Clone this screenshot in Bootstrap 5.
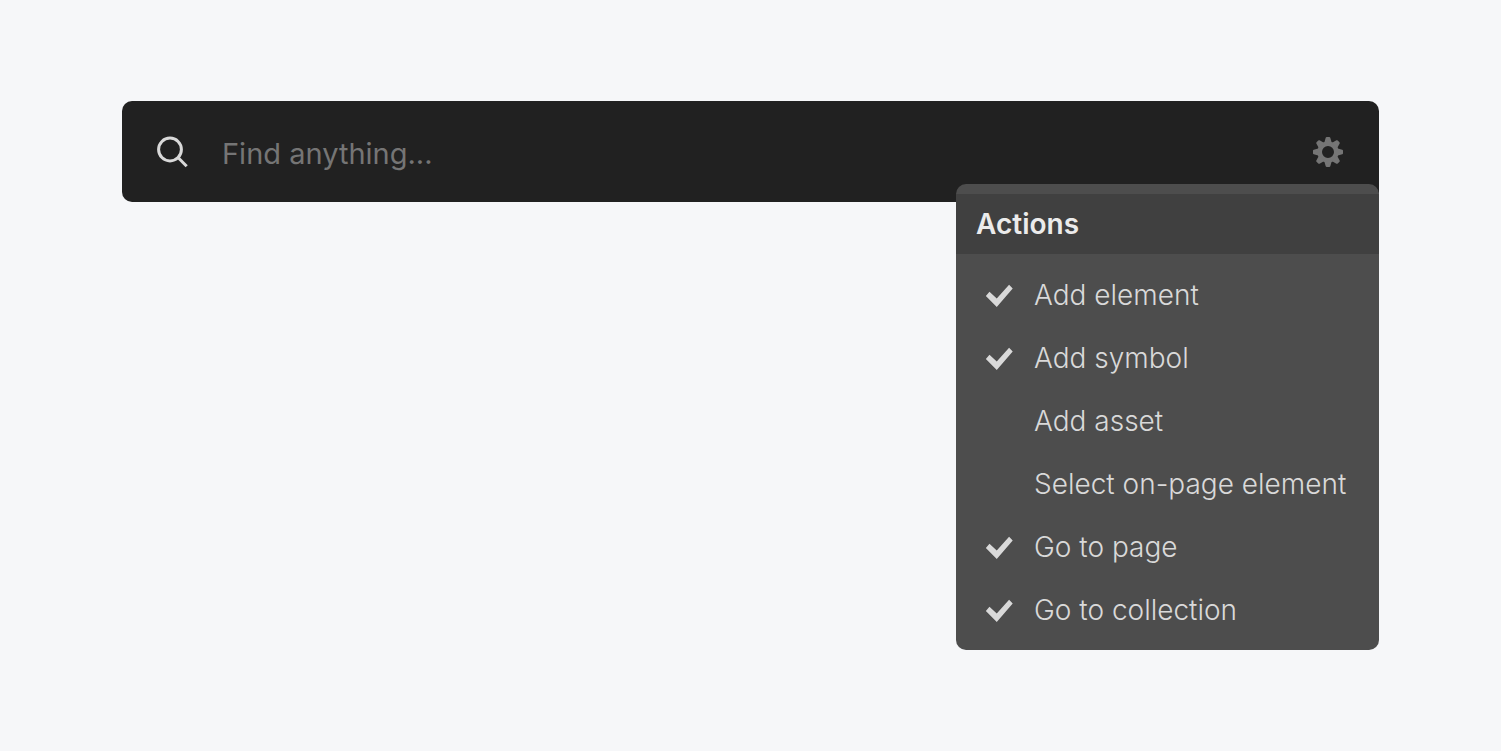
<!DOCTYPE html>
<html lang="en">
<head>
<meta charset="utf-8">
<meta name="viewport" content="width=device-width, initial-scale=1">
<title>Quick find</title>
<link href="https://cdn.jsdelivr.net/npm/bootstrap@5.3.0/dist/css/bootstrap.min.css" rel="stylesheet">
<style>
body{background:#f6f7f9;font-family:Inter,sans-serif;}
.page{padding:101px 16px 0;}
.finder{max-width:1257px;}
.finder-bar{background:#212121;height:101px;border-radius:10px;padding:0 35px 0 32px;}
.finder-input,.finder-input:focus{background:transparent;border:0;box-shadow:none;color:#d9d9d9;font-size:29px;font-weight:400;line-height:40px;padding:4px 0 0;margin-left:32px;}
.finder-input::placeholder{color:#757575;opacity:1;}
.gear,.gear:hover{color:#757575;line-height:0;}
.actions{background:#4d4d4d;border-radius:10px;width:423px;max-width:100%;margin-top:-18px;padding:10px 0 8px;color:#d9d9d9;}
.actions-title{background:#404040;color:#ebebeb;font-size:28px;line-height:60px;padding:0 20px;margin:0;font-weight:600;}
.actions-list{padding:10px 29px 0;}
.action{height:63px;font-size:28px;font-weight:300;gap:21px;cursor:pointer;white-space:nowrap;}
.action span{padding-bottom:2px;}
.action input{appearance:none;width:28px;height:28px;margin:0;flex:none;}
.action input:checked{background:#d9d9d9;clip-path:polygon(3% 52%,16% 37%,42% 61%,86% 12%,99% 25%,42% 91%);}
</style>
</head>
<body>
<main class="page min-vh-100">
<div class="finder mx-auto">
<div class="finder-bar d-flex align-items-center">
<svg class="flex-shrink-0" width="36" height="36" viewBox="0 0 36 36" fill="none" stroke="#d9d9d9" stroke-width="3" aria-hidden="true"><circle cx="16" cy="15.500" r="11.400"/><path d="M24 23.500l8.700 8.700"/></svg>
<input class="form-control finder-input" type="text" placeholder="Find anything..." aria-label="Find anything">
<button class="btn p-0 border-0 gear" type="button" aria-label="Settings">
<svg width="32" height="32" viewBox="-16 -16 32 32" fill="currentColor" aria-hidden="true">
<defs><path id="tooth" d="M-3.800 -9L-2.300 -14.200Q-2.100 -15 -1.200 -15H1.200Q2.100 -15 2.300 -14.200L3.800 -9Z"/></defs>
<circle r="8.300" fill="none" stroke="currentColor" stroke-width="4.600"/>
<use href="#tooth"/><use href="#tooth" transform="rotate(45)"/><use href="#tooth" transform="rotate(90)"/><use href="#tooth" transform="rotate(135)"/><use href="#tooth" transform="rotate(180)"/><use href="#tooth" transform="rotate(225)"/><use href="#tooth" transform="rotate(270)"/><use href="#tooth" transform="rotate(315)"/>
</svg>
</button>
</div>
<section class="actions position-relative ms-auto">
<h2 class="actions-title">Actions</h2>
<div class="actions-list">
<label class="action d-flex align-items-center"><input type="checkbox" checked><span>Add element</span></label>
<label class="action d-flex align-items-center"><input type="checkbox" checked><span>Add symbol</span></label>
<label class="action d-flex align-items-center"><input type="checkbox"><span>Add asset</span></label>
<label class="action d-flex align-items-center"><input type="checkbox"><span>Select on-page element</span></label>
<label class="action d-flex align-items-center"><input type="checkbox" checked><span>Go to page</span></label>
<label class="action d-flex align-items-center"><input type="checkbox" checked><span>Go to collection</span></label>
</div>
</section>
</div>
</main>
<script src="https://cdn.jsdelivr.net/npm/bootstrap@5.3.0/dist/js/bootstrap.bundle.min.js"></script>
</body>
</html>
